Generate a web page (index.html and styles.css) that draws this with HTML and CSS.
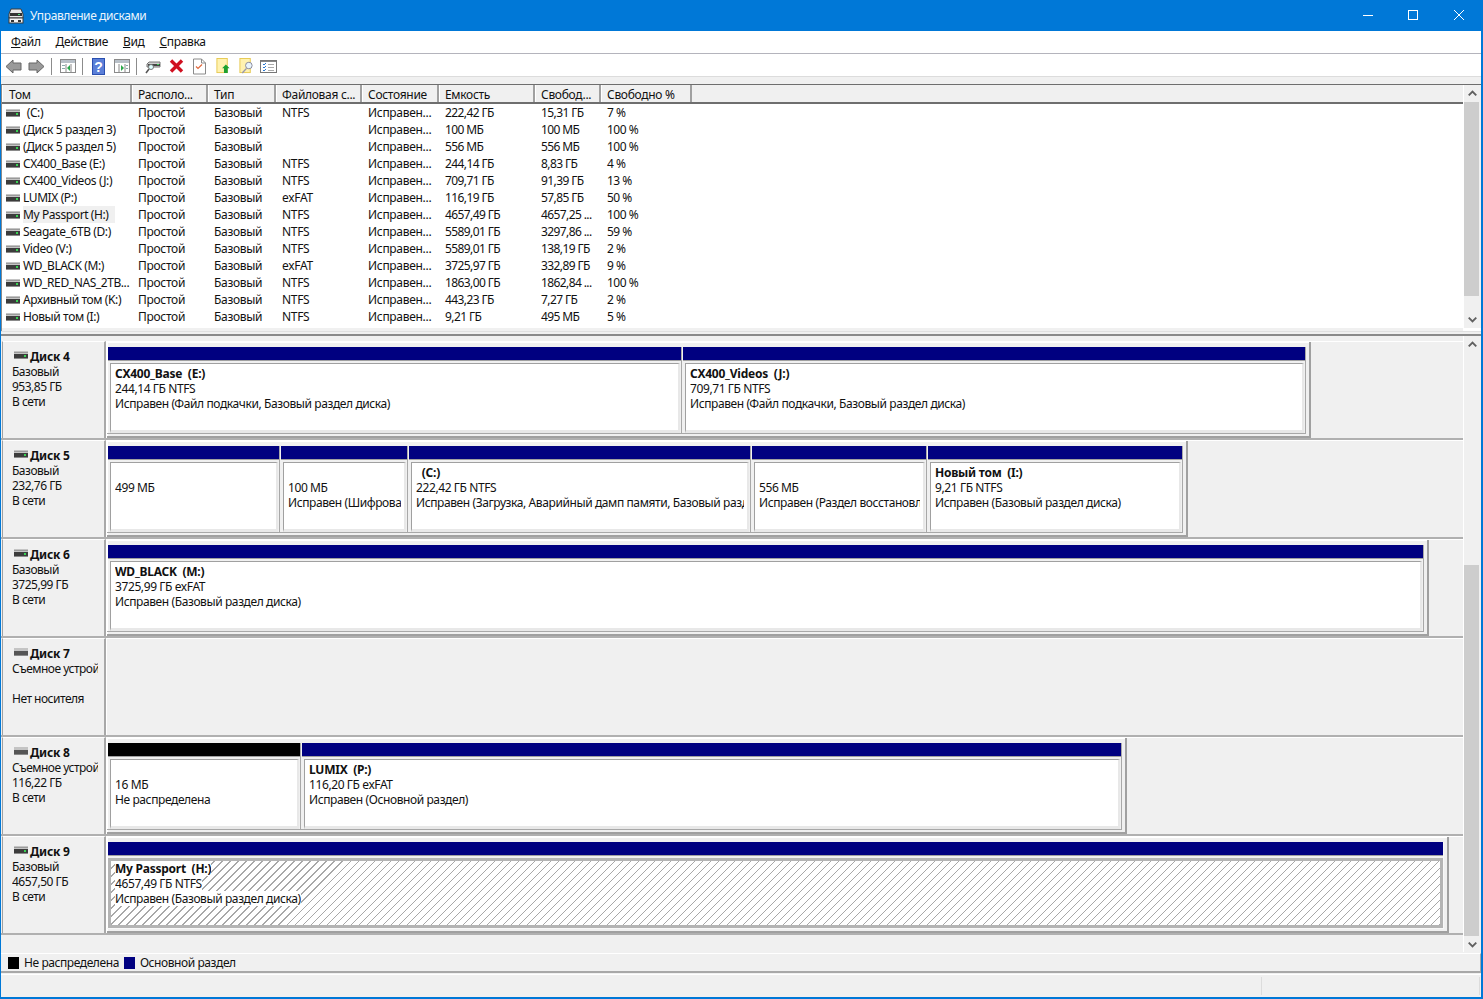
FILE: index.html
```html
<!DOCTYPE html>
<html lang="ru">
<head>
<meta charset="utf-8">
<title>Управление дисками</title>
<link rel="stylesheet" href="styles.css">
</head>
<body>
<svg class="defs" width="0" height="0">
  <symbol id="drive" viewBox="0 0 14 8"><rect x="0" y="0" width="14" height="3" fill="#c4c4c4"/><rect x="0" y="1" width="14" height="1" fill="#9a9a9a"/><rect x="0" y="3" width="14" height="4" fill="#3c3c3c"/><rect x="0" y="7" width="14" height="1" fill="#8a8a8a"/><rect x="10" y="4" width="2" height="2" fill="#39d353"/></symbol>
  <symbol id="driveoff" viewBox="0 0 14 8"><rect x="0" y="0" width="14" height="3" fill="#c4c4c4"/><rect x="0" y="3" width="14" height="4" fill="#555"/><rect x="0" y="7" width="14" height="1" fill="#8a8a8a"/></symbol>
</svg>
<div class="window">
  <header class="title">
    <svg class="title-icon" width="16" height="16" viewBox="0 0 16 16"><path d="M3 1h10l2 5v4H1V6z" fill="#e8e8e8" stroke="#3a3a3a"/><rect x="2" y="5" width="12" height="3" fill="#333"/><rect x="10" y="6" width="2" height="1" fill="#4fe07a"/><rect x="1" y="10" width="14" height="5" fill="#f4f4f4" stroke="#3a3a3a"/><rect x="3" y="12" width="3" height="2" fill="#333"/><rect x="10" y="12" width="3" height="2" fill="#333"/></svg>
    <span class="title-text">Управление дисками</span>
    <div class="controls">
      <svg width="46" height="31" viewBox="0 0 46 31"><path d="M19 15.500h10" stroke="#fff"/></svg>
      <svg width="46" height="31" viewBox="0 0 46 31"><rect x="18.500" y="10.500" width="9" height="9" fill="none" stroke="#fff"/></svg>
      <svg width="46" height="31" viewBox="0 0 46 31"><path d="M18 10l10 10M28 10L18 20" stroke="#fff" fill="none"/></svg>
    </div>
  </header>
  <nav class="menu">
    <span><u>Ф</u>айл</span><span><u>Д</u>ействие</span><span><u>В</u>ид</span><span><u>С</u>правка</span>
  </nav>
  <div class="toolbar">
    <svg class="tb w17" viewBox="0 0 17 15"><path d="M8 1L1 7.500 8 14v-3h8V4H8z" fill="#9a9a9a" stroke="#666"/></svg>
    <svg class="tb w17 ml6" viewBox="0 0 17 15"><path d="M9 1l7 6.500L9 14v-3H1V4h8z" fill="#9a9a9a" stroke="#666"/></svg>
    <i class="sep s1"></i>
    <svg class="tb w17" viewBox="0 0 17 15"><rect x=".5" y=".5" width="15" height="13" fill="#fff" stroke="#8a8a8a"/><rect x="1" y="1" width="14" height="3" fill="#b8c0c8"/><path d="M6 5v8M11 5v8" stroke="#8a8a8a"/><rect x="2" y="6" width="3" height="1" fill="#8aa"/><rect x="2" y="9" width="3" height="1" fill="#8aa"/><path d="M10 6v6L7 9z" fill="#2aa84a"/></svg>
    <i class="sep s2"></i>
    <svg class="tb w13" viewBox="0 0 13 17"><rect width="13" height="17" fill="#2a4fb0"/><rect x="1" y="1" width="11" height="15" fill="#5b7fd8"/><text x="6.500" y="14" class="q">?</text></svg>
    <svg class="tb w17 ml9" viewBox="0 0 17 15"><rect x=".5" y=".5" width="15" height="13" fill="#fff" stroke="#8a8a8a"/><rect x="1" y="1" width="14" height="3" fill="#b8c0c8"/><path d="M5 5v8M11 5v8" stroke="#8a8a8a"/><path d="M7 6v6l3-3z" fill="#2aa84a"/><rect x="12" y="6" width="2" height="1" fill="#8aa"/><rect x="12" y="9" width="2" height="1" fill="#8aa"/></svg>
    <i class="sep s3"></i>
    <svg class="tb w16" viewBox="0 0 16 15"><path d="M2 5l2-2h11v5H2z" fill="#cfcfcf" stroke="#777"/><rect x="3" y="5" width="12" height="2" fill="#444"/><rect x="12" y="5" width="2" height="1" fill="#39d353"/><circle cx="6" cy="8" r="2.500" fill="#dff" stroke="#777"/><path d="M4 10l-3 4" stroke="#555" stroke-width="1.500"/></svg>
    <svg class="tb w15 ml8" viewBox="0 0 15 15"><path d="M2 2l11 11M13 2L2 13" stroke="#d01020" stroke-width="3.400"/></svg>
    <svg class="tb w13 ml9" viewBox="0 0 13 16"><path d="M.5.5h8l4 4v11H.5z" fill="#fff" stroke="#8a8a8a"/><path d="M8.500.5v4h4" fill="none" stroke="#8a8a8a"/><path d="M3 8l2 2 4-4" fill="none" stroke="#e0683c" stroke-width="1.200"/></svg>
    <svg class="tb w15 ml10" viewBox="0 0 15 17"><rect x=".5" y=".5" width="11" height="15" fill="#fff2b0" stroke="#e6c850"/><path d="M10 7l4 4h-2v5H8v-5H6z" fill="#1ca030"/></svg>
    <svg class="tb w15 ml8" viewBox="0 0 15 17"><rect x=".5" y=".5" width="11" height="15" fill="#fff2b0" stroke="#e6c850"/><circle cx="10" cy="8" r="3.500" fill="#e8f4fc" stroke="#889"/><path d="M7.500 11L3 16" stroke="#99a" stroke-width="1.500"/></svg>
    <svg class="tb w17 ml6" viewBox="0 0 17 13"><rect x=".5" y=".5" width="16" height="12" fill="#fff" stroke="#777"/><rect x="1" y="1" width="15" height="1" fill="#888"/><path d="M3 4l1 1 2-2M3 7l1 1 2-2M3 10l1 1 2-2" fill="none" stroke="#2a78d0"/><path d="M8 4.500h6M8 7.500h6M8 10.500h6" stroke="#aaa"/></svg>
  </div>

  <section class="volumes">
    <div class="vol-head">
      <span class="th c1">Том</span><span class="th c2">Располо...</span><span class="th c3">Тип</span><span class="th c4">Файловая с...</span><span class="th c5">Состояние</span><span class="th c6">Емкость</span><span class="th c7">Свобод...</span><span class="th c8">Свободно %</span><span class="th-rest"></span>
    </div>
    <div class="vol-scroll">
      <div class="vol-list">
        <div class="vr"><span class="td c1"><svg class="dr"><use href="#drive"/></svg><span class="nm ind">&nbsp;(C:)</span></span><span class="td c2">Простой</span><span class="td c3">Базовый</span><span class="td c4">NTFS</span><span class="td c5">Исправен...</span><span class="td c6">222,42 ГБ</span><span class="td c7">15,31 ГБ</span><span class="td c8">7 %</span></div>
        <div class="vr"><span class="td c1"><svg class="dr"><use href="#drive"/></svg><span class="nm">(Диск 5 раздел 3)</span></span><span class="td c2">Простой</span><span class="td c3">Базовый</span><span class="td c4"></span><span class="td c5">Исправен...</span><span class="td c6">100 МБ</span><span class="td c7">100 МБ</span><span class="td c8">100 %</span></div>
        <div class="vr"><span class="td c1"><svg class="dr"><use href="#drive"/></svg><span class="nm">(Диск 5 раздел 5)</span></span><span class="td c2">Простой</span><span class="td c3">Базовый</span><span class="td c4"></span><span class="td c5">Исправен...</span><span class="td c6">556 МБ</span><span class="td c7">556 МБ</span><span class="td c8">100 %</span></div>
        <div class="vr"><span class="td c1"><svg class="dr"><use href="#drive"/></svg><span class="nm">CX400_Base (E:)</span></span><span class="td c2">Простой</span><span class="td c3">Базовый</span><span class="td c4">NTFS</span><span class="td c5">Исправен...</span><span class="td c6">244,14 ГБ</span><span class="td c7">8,83 ГБ</span><span class="td c8">4 %</span></div>
        <div class="vr"><span class="td c1"><svg class="dr"><use href="#drive"/></svg><span class="nm">CX400_Videos (J:)</span></span><span class="td c2">Простой</span><span class="td c3">Базовый</span><span class="td c4">NTFS</span><span class="td c5">Исправен...</span><span class="td c6">709,71 ГБ</span><span class="td c7">91,39 ГБ</span><span class="td c8">13 %</span></div>
        <div class="vr"><span class="td c1"><svg class="dr"><use href="#drive"/></svg><span class="nm">LUMIX (P:)</span></span><span class="td c2">Простой</span><span class="td c3">Базовый</span><span class="td c4">exFAT</span><span class="td c5">Исправен...</span><span class="td c6">116,19 ГБ</span><span class="td c7">57,85 ГБ</span><span class="td c8">50 %</span></div>
        <div class="vr"><span class="td c1"><svg class="dr"><use href="#drive"/></svg><span class="nm sel">My Passport (H:)</span></span><span class="td c2">Простой</span><span class="td c3">Базовый</span><span class="td c4">NTFS</span><span class="td c5">Исправен...</span><span class="td c6">4657,49 ГБ</span><span class="td c7">4657,25 ...</span><span class="td c8">100 %</span></div>
        <div class="vr"><span class="td c1"><svg class="dr"><use href="#drive"/></svg><span class="nm">Seagate_6TB (D:)</span></span><span class="td c2">Простой</span><span class="td c3">Базовый</span><span class="td c4">NTFS</span><span class="td c5">Исправен...</span><span class="td c6">5589,01 ГБ</span><span class="td c7">3297,86 ...</span><span class="td c8">59 %</span></div>
        <div class="vr"><span class="td c1"><svg class="dr"><use href="#drive"/></svg><span class="nm">Video (V:)</span></span><span class="td c2">Простой</span><span class="td c3">Базовый</span><span class="td c4">NTFS</span><span class="td c5">Исправен...</span><span class="td c6">5589,01 ГБ</span><span class="td c7">138,19 ГБ</span><span class="td c8">2 %</span></div>
        <div class="vr"><span class="td c1"><svg class="dr"><use href="#drive"/></svg><span class="nm">WD_BLACK (M:)</span></span><span class="td c2">Простой</span><span class="td c3">Базовый</span><span class="td c4">exFAT</span><span class="td c5">Исправен...</span><span class="td c6">3725,97 ГБ</span><span class="td c7">332,89 ГБ</span><span class="td c8">9 %</span></div>
        <div class="vr"><span class="td c1"><svg class="dr"><use href="#drive"/></svg><span class="nm">WD_RED_NAS_2TB...</span></span><span class="td c2">Простой</span><span class="td c3">Базовый</span><span class="td c4">NTFS</span><span class="td c5">Исправен...</span><span class="td c6">1863,00 ГБ</span><span class="td c7">1862,84 ...</span><span class="td c8">100 %</span></div>
        <div class="vr"><span class="td c1"><svg class="dr"><use href="#drive"/></svg><span class="nm">Архивный том (K:)</span></span><span class="td c2">Простой</span><span class="td c3">Базовый</span><span class="td c4">NTFS</span><span class="td c5">Исправен...</span><span class="td c6">443,23 ГБ</span><span class="td c7">7,27 ГБ</span><span class="td c8">2 %</span></div>
        <div class="vr"><span class="td c1"><svg class="dr"><use href="#drive"/></svg><span class="nm">Новый том (I:)</span></span><span class="td c2">Простой</span><span class="td c3">Базовый</span><span class="td c4">NTFS</span><span class="td c5">Исправен...</span><span class="td c6">9,21 ГБ</span><span class="td c7">495 МБ</span><span class="td c8">5 %</span></div>
      </div>
    </div>
    <div class="sb sb-top">
      <svg class="arr" viewBox="0 0 18 17"><path d="M5 10.500l4-4 4 4" fill="none" stroke="#606060" stroke-width="2"/></svg>
      <div class="track"><div class="thumb t1"></div></div>
      <svg class="arr" viewBox="0 0 18 17"><path d="M5 6.500l4 4 4-4" fill="none" stroke="#606060" stroke-width="2"/></svg>
    </div>
  </section>
  <div class="splitter"></div>

  <section class="disks">
    <div class="disk-list">

      <div class="disk">
        <div class="dlabel"><div class="dname"><svg class="dr"><use href="#drive"/></svg><b>Диск 4</b></div><div>Базовый</div><div>953,85 ГБ</div><div>В сети</div></div>
        <div class="dmap"><div class="dbox">
          <div class="part" style="width:575px"><div class="bar"></div><div class="pb"><b>CX400_Base  (E:)</b><span>244,14 ГБ NTFS</span><span>Исправен (Файл подкачки, Базовый раздел диска)</span></div></div>
          <div class="part" style="width:624px"><div class="bar"></div><div class="pb"><b>CX400_Videos  (J:)</b><span>709,71 ГБ NTFS</span><span>Исправен (Файл подкачки, Базовый раздел диска)</span></div></div>
        </div></div>
      </div>

      <div class="disk">
        <div class="dlabel"><div class="dname"><svg class="dr"><use href="#drive"/></svg><b>Диск 5</b></div><div>Базовый</div><div>232,76 ГБ</div><div>В сети</div></div>
        <div class="dmap"><div class="dbox">
          <div class="part" style="width:173px"><div class="bar"></div><div class="pb"><b> </b><span>499 МБ</span></div></div>
          <div class="part" style="width:128px"><div class="bar"></div><div class="pb"><b> </b><span>100 МБ</span><span>Исправен (Шифрованный системный раздел)</span></div></div>
          <div class="part" style="width:343px"><div class="bar"></div><div class="pb"><b>  (C:)</b><span>222,42 ГБ NTFS</span><span>Исправен (Загрузка, Аварийный дамп памяти, Базовый раздел диска)</span></div></div>
          <div class="part" style="width:176px"><div class="bar"></div><div class="pb"><b> </b><span>556 МБ</span><span>Исправен (Раздел восстановления)</span></div></div>
          <div class="part" style="width:256px"><div class="bar"></div><div class="pb"><b>Новый том  (I:)</b><span>9,21 ГБ NTFS</span><span>Исправен (Базовый раздел диска)</span></div></div>
        </div></div>
      </div>

      <div class="disk">
        <div class="dlabel"><div class="dname"><svg class="dr"><use href="#drive"/></svg><b>Диск 6</b></div><div>Базовый</div><div>3725,99 ГБ</div><div>В сети</div></div>
        <div class="dmap"><div class="dbox">
          <div class="part" style="width:1317px"><div class="bar"></div><div class="pb"><b>WD_BLACK  (M:)</b><span>3725,99 ГБ exFAT</span><span>Исправен (Базовый раздел диска)</span></div></div>
        </div></div>
      </div>

      <div class="disk">
        <div class="dlabel"><div class="dname"><svg class="dr"><use href="#driveoff"/></svg><b>Диск 7</b></div><div>Съемное устройство</div><div>&nbsp;</div><div>Нет носителя</div></div>
        <div class="dmap"></div>
      </div>

      <div class="disk">
        <div class="dlabel"><div class="dname"><svg class="dr"><use href="#driveoff"/></svg><b>Диск 8</b></div><div>Съемное устройство</div><div>116,22 ГБ</div><div>В сети</div></div>
        <div class="dmap"><div class="dbox">
          <div class="part" style="width:194px"><div class="bar black"></div><div class="pb"><b> </b><span>16 МБ</span><span>Не распределена</span></div></div>
          <div class="part" style="width:821px"><div class="bar"></div><div class="pb"><b>LUMIX  (P:)</b><span>116,20 ГБ exFAT</span><span>Исправен (Основной раздел)</span></div></div>
        </div></div>
      </div>

      <div class="disk">
        <div class="dlabel"><div class="dname"><svg class="dr"><use href="#drive"/></svg><b>Диск 9</b></div><div>Базовый</div><div>4657,50 ГБ</div><div>В сети</div></div>
        <div class="dmap"><div class="dbox">
          <div class="part part-sel" style="width:1337px"><div class="bar"></div><div class="pb hatch"><b>My Passport  (H:)</b><span>4657,49 ГБ NTFS</span><span>Исправен (Базовый раздел диска)</span></div></div>
        </div></div>
      </div>

    </div>
    <div class="sb sb-low">
      <svg class="arr" viewBox="0 0 18 17"><path d="M5 10.500l4-4 4 4" fill="none" stroke="#606060" stroke-width="2"/></svg>
      <div class="track"><div class="thumb t2"></div></div>
      <svg class="arr" viewBox="0 0 18 17"><path d="M5 6.500l4 4 4-4" fill="none" stroke="#606060" stroke-width="2"/></svg>
    </div>
  </section>

  <div class="legend">
    <i class="sw swb"></i><span>Не распределена</span><i class="sw swn"></i><span>Основной раздел</span>
  </div>
  <footer class="status"><i class="st1"></i><i class="st2"></i></footer>
</div>
</body>
</html>
```
FILE: styles.css
```css
* { box-sizing: border-box; }
html, body { margin: 0; padding: 0; }
body {
  width: 1483px;
  height: 999px;
  overflow: hidden;
  font-family: "Noto Sans", "Open Sans", sans-serif;
  font-size: 12px;
  letter-spacing: -0.3px;
  color: #111;
  background: #f0f0f0;
}
.defs { position: absolute; }
.window {
  display: flex;
  flex-direction: column;
  height: 999px;
  border: solid #0078d7;
  border-width: 0 2px 2px 1px;
  background: #f0f0f0;
}
.title {
  display: flex;
  align-items: center;
  height: 31px;
  background: #0078d7;
  color: #fff;
  flex: none;
  padding-left: 8px;
  margin-left: -1px;
  margin-right: -2px;
}
.title-icon { flex: none; margin-right: 6px; }
.title-text { color: #eaf4fc; line-height: 31px; letter-spacing: -0.4px; }
.controls { display: flex; margin-left: auto; margin-right: 1px; }
.controls svg { display: block; }
.menu {
  display: flex;
  align-items: center;
  height: 23px;
  flex: none;
  background: #fff;
  padding: 0 0 2px 10px;
  gap: 15px;
  letter-spacing: -0.35px;
  border-bottom: 1px solid #b4b4bc;
}
.menu u { text-underline-offset: 1px; }
.toolbar {
  display: flex;
  align-items: center;
  height: 23px;
  flex: none;
  background: #fff;
  padding: 2px 0 0 4px;
  border-bottom: 1px solid #dcdcdc;
}
.tb { display: block; flex: none; }
.w17 { width: 17px; height: 15px; }
.w13 { width: 13px; height: 17px; }
.w16 { width: 16px; height: 15px; }
.w15 { width: 15px; height: 16px; }
.ml6 { margin-left: 6px; }
.ml8 { margin-left: 8px; }
.ml9 { margin-left: 9px; }
.ml10 { margin-left: 10px; }
.q { font: bold 14px "Liberation Sans", sans-serif; fill: #fff; text-anchor: middle; }
.sep { display: block; flex: none; width: 1px; height: 17px; background: #8c8c8c; }
.s1 { margin: 0 8px 0 6px; }
.s2 { margin: 0 9px 0 5px; }
.s3 { margin: 0 8px 0 5px; }

.volumes {
  position: relative;
  display: flex;
  flex-direction: column;
  height: 247px;
  flex: none;
  margin-top: 7px;
  background: #fff;
  border-left: 1px solid #8a8a8a;
  border-top: 1px solid #6e6e6e;
  padding-right: 18px;
}
.vol-head {
  display: flex;
  height: 19px;
  flex: none;
  background: #f0f0f0;
  border-bottom: 2px solid #6e6e6e;
}
.th {
  display: block;
  height: 17px;
  line-height: 19px;
  padding-left: 5px;
  border-left: 1px solid #fff;
  border-right: 2px solid #a0a0a0;
  white-space: nowrap;
  overflow: hidden;
  flex: none;
}
.th.c1 { padding-left: 6px; }
.th-rest { flex: 1; }
.c1 { width: 130px; }
.c2 { width: 76px; }
.c3 { width: 68px; }
.c4 { width: 86px; }
.c5 { width: 77px; }
.c6 { width: 96px; }
.c7 { width: 66px; }
.c8 { width: 91px; }
.vol-scroll { flex: 1; overflow: hidden; background: #fff; border-bottom: 3px solid #f0f0f0; }
.vr { display: flex; height: 17px; line-height: 17px; }
.td {
  display: block;
  flex: none;
  padding-left: 6px;
  white-space: nowrap;
  overflow: hidden;
}
.td.c6, .td.c7 { letter-spacing: -0.6px; }
.td.c8 { letter-spacing: -0.5px; }
.td.c1 { display: flex; align-items: center; padding-left: 4px; }
.dr { display: block; flex: none; width: 14px; height: 8px; }
.nm { margin-left: 3px; padding: 0 6px 0 0; line-height: 17px; letter-spacing: -0.4px; }
.ind { margin-left: 4px; }
.sel { background: #f0f0f0; }
.sb {
  flex: none;
  display: flex;
  flex-direction: column;
  width: 18px;
  background: #f0f0f0;
  border-left: 1px solid #fff;
}
.sb-top { position: absolute; top: 0; right: 0; bottom: 3px; }
.arr { display: block; width: 17px; height: 17px; flex: none; }
.track { flex: 1; position: relative; display: flex; flex-direction: column; }
.thumb { background: #cdcdcd; margin-right: 2px; }
.t1 { height: 194px; }
.t2 { height: 371px; margin-top: 212px; }

.splitter {
  flex: none;
  height: 5px;
  background: #f0f0f0;
  border-bottom: 2px solid #8a8a8a;
  border-top: 1px solid #e0e0e0;
}
.disks { display: flex; flex: none; height: 616px; background: #f0f0f0; }
.disk-list { flex: 1; min-width: 0; padding-top: 5px; }
.disk {
  display: flex;
  height: 99px;
  border-bottom: 2px solid #b0b0b0;
}
.dlabel {
  width: 104px;
  flex: none;
  margin-left: 1px;
  padding: 7px 0 0 9px;
  line-height: 15px;
  letter-spacing: -0.5px;
  border-top: 1px solid #fff;
  border-left: 1px solid #a0a0a0;
  border-right: 2px solid #a8a8a8;
  white-space: nowrap;
  overflow: hidden;
}
.dlabel > div { width: 86px; overflow: hidden; }
.dname { display: flex; align-items: flex-start; margin-left: 2px; }
.dname .dr { margin-top: 2px; margin-right: 2px; }
.dname b { letter-spacing: -0.25px; }
.dmap { flex: 1; min-width: 0; border-left: 1px solid #fff; border-top: 1px solid #fff; }
.dbox {
  display: inline-flex;
  height: 96px;
  border-right: 2px solid #a0a0a0;
  border-bottom: 2px solid #a0a0a0;
  padding: 5px 3px 2px 0;
  box-shadow: inset 1px 1px 0 #fff;
  vertical-align: top;
}
.part {
  display: flex;
  flex-direction: column;
  flex: none;
  border-right: 1px solid #a8a8a8;
  border-bottom: 1px solid #a8a8a8;
}
.part-sel { border-color: #f8f8f8; }
.bar { height: 14px; flex: none; background: #000080; border-bottom: 1px solid #a0a0a0; margin-left: 1px; }
.bar.black { background: #000; }
.pb {
  flex: 1;
  display: flex;
  flex-direction: column;
  margin: 2px 1px 0 3px;
  padding: 2px 0 0 4px;
  background: #fff;
  border-top: 1px solid #a0a0a0;
  border-left: 1px solid #a0a0a0;
  border-right: 2px solid #e8e8e8;
  border-bottom: 3px solid #e8e8e8;
  line-height: 15px;
  letter-spacing: -0.4px;
  white-space: pre;
  overflow: hidden;
  min-width: 0;
}
.pb b { height: 15px; flex: none; letter-spacing: -0.25px; margin-right: 2px; overflow: hidden; }
.pb span { flex: none; margin-right: 3px; overflow: hidden; }
.hatch {
  margin: 2px 0 0 1px;
  padding: 0 0 0 4px;
  border: 3px solid #b4b4b4;
  background: repeating-linear-gradient(135deg, #fff 0 4.86px, #a8a8a8 4.86px 5.66px);
}
.hatch b, .hatch span { align-self: flex-start; background: #fff; margin-right: 0; }
.legend {
  display: flex;
  align-items: center;
  height: 20px;
  flex: none;
  margin-top: 1px;
  padding-left: 7px;
  letter-spacing: -0.42px;
  border-top: 1px solid #fff;
  border-bottom: 2px solid #a8a8a8;
  border-right: 1px solid #a8a8a8;
}
.sw { display: block; width: 11px; height: 12px; flex: none; }
.swb { background: #000; margin-right: 5px; }
.swn { background: #000080; margin: 0 5px; }
.status {
  flex: 1;
  display: flex;
  justify-content: flex-end;
  border-top: 1px solid #fff;
  padding: 2px 0 2px;
  margin-top: 1px;
}
.st1, .st2 { display: block; width: 1px; background: #dcdcdc; }
.st1 { margin-right: 217px; }
.st2 { margin-right: 1px; }
```
